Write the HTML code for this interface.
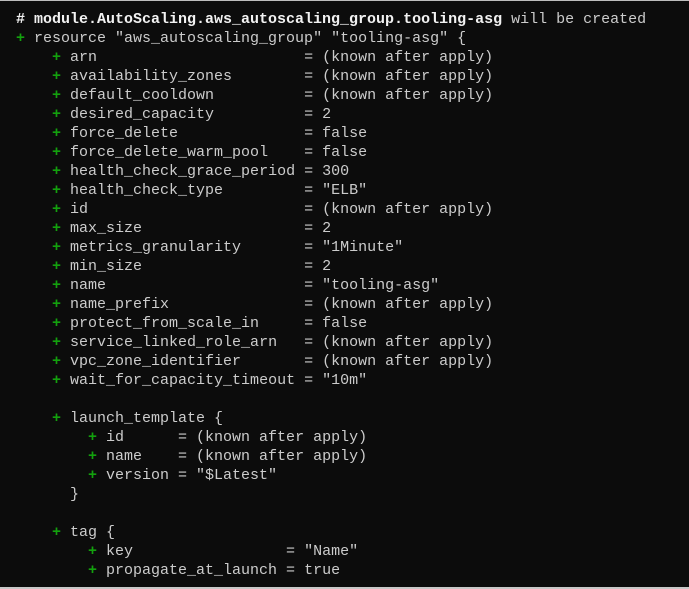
<!DOCTYPE html>
<html><head><meta charset="utf-8"><style>
html,body{margin:0;padding:0;width:689px;height:589px;overflow:hidden;background:#0c0c0c;}
.top{position:absolute;left:0;top:0;width:689px;height:1px;background:#bdbdbd;}
.bot{position:absolute;left:0;top:587px;width:689px;height:2px;background:#c8c8c8;}
pre{position:absolute;left:16px;top:10px;margin:0;font-family:"Liberation Mono",monospace;font-size:15px;line-height:19px;color:#cccccc;}
.g{color:#13a10e;font-weight:bold;}
.b{color:#f2f2f2;font-weight:bold;}
</style></head><body><div class="top"></div><pre><span class="b"># module.AutoScaling.aws_autoscaling_group.tooling-asg</span> will be created
<span class="g">+</span> resource "aws_autoscaling_group" "tooling-asg" {
    <span class="g">+</span> arn                       = (known after apply)
    <span class="g">+</span> availability_zones        = (known after apply)
    <span class="g">+</span> default_cooldown          = (known after apply)
    <span class="g">+</span> desired_capacity          = 2
    <span class="g">+</span> force_delete              = false
    <span class="g">+</span> force_delete_warm_pool    = false
    <span class="g">+</span> health_check_grace_period = 300
    <span class="g">+</span> health_check_type         = "ELB"
    <span class="g">+</span> id                        = (known after apply)
    <span class="g">+</span> max_size                  = 2
    <span class="g">+</span> metrics_granularity       = "1Minute"
    <span class="g">+</span> min_size                  = 2
    <span class="g">+</span> name                      = "tooling-asg"
    <span class="g">+</span> name_prefix               = (known after apply)
    <span class="g">+</span> protect_from_scale_in     = false
    <span class="g">+</span> service_linked_role_arn   = (known after apply)
    <span class="g">+</span> vpc_zone_identifier       = (known after apply)
    <span class="g">+</span> wait_for_capacity_timeout = "10m"

    <span class="g">+</span> launch_template {
        <span class="g">+</span> id      = (known after apply)
        <span class="g">+</span> name    = (known after apply)
        <span class="g">+</span> version = "$Latest"
      }

    <span class="g">+</span> tag {
        <span class="g">+</span> key                 = "Name"
        <span class="g">+</span> propagate_at_launch = true
</pre><div class="bot"></div></body></html>
